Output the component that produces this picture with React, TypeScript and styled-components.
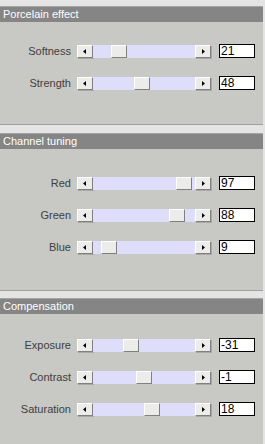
import React from 'react';
import styled, { createGlobalStyle } from 'styled-components';

const GlobalStyle = createGlobalStyle`
  html, body { margin: 0; padding: 0; background: #e4e4e4; }
  body { font-family: "Liberation Sans", Arial, sans-serif; }
`;

const Page = styled.div`
  width: 263px;
  height: 444px;
  overflow: hidden;
  padding-top: 6px;
  border-right: 2px solid #e4e4e4;
  background: #e4e4e4;
`;

const Section = styled.section<{ $gap: number }>`
  border-top: 1px solid #a4a4a4;
  margin-bottom: ${p => p.$gap}px;
`;

const Header = styled.div`
  height: 15px;
  line-height: 15px;
  background: #858585;
  color: #fff;
  font-size: 11px;
  padding-left: 3px;
`;

const Panel = styled.div<{ $top: number; $bottom: number }>`
  background: #c8c8c4;
  padding: ${p => p.$top}px 0 ${p => p.$bottom}px;
  display: flex;
  flex-direction: column;
  gap: 18px;
  border-bottom: 1px solid #a0a0a0;
`;

const Row = styled.div`
  display: flex;
  align-items: center;
  height: 14px;
`;

const Label = styled.span`
  width: 71px;
  text-align: right;
  font-size: 11px;
  color: #404040;
  margin-right: 6px;
`;

const ArrowBtn = styled.div`
  width: 16px;
  height: 13px;
  box-sizing: border-box;
  background: #ececea;
  border-top: 1px solid #fff;
  border-left: 1px solid #fff;
  border-right: 1px solid #808080;
  border-bottom: 1px solid #808080;
  box-shadow: 1px 1px 0 #a8a8a4;
  display: flex;
  align-items: center;
  justify-content: center;
`;

const Track = styled.div`
  position: relative;
  width: 102px;
  height: 13px;
  background: #dedefa;
`;

const Thumb = styled.div`
  position: absolute;
  top: 0;
  width: 16px;
  height: 13px;
  box-sizing: border-box;
  background: #ececea;
  border-top: 1px solid #fff;
  border-left: 1px solid #fff;
  border-right: 1px solid #808080;
  border-bottom: 1px solid #808080;
`;

const ValueBox = styled.div`
  width: 36px;
  height: 14px;
  box-sizing: border-box;
  margin-left: 8px;
  border: 1px solid #000;
  background: #fff;
  font-size: 12px;
  line-height: 12px;
  padding-left: 1px;
  color: #000;
`;

const Tri = ({ dir }: { dir: 'l' | 'r' }) => (
  <svg width="4" height="5" viewBox="0 0 4 5">
    {dir === 'l' ? <path d="M3 0 L0 2.5 L3 5 Z" fill="#000" /> : <path d="M1 0 L4 2.5 L1 5 Z" fill="#000" />}
  </svg>
);

type Slider = { label: string; value: number; min: number; max: number };

const SliderRow = ({ s }: { s: Slider }) => {
  const pos = ((s.value - s.min) / (s.max - s.min)) * 86;
  return (
    <Row>
      <Label>{s.label}</Label>
      <ArrowBtn><Tri dir="l" /></ArrowBtn>
      <Track>
        <Thumb style={{ left: pos }} />
      </Track>
      <ArrowBtn><Tri dir="r" /></ArrowBtn>
      <ValueBox>{s.value}</ValueBox>
    </Row>
  );
};

const sections = [
  {
    title: 'Porcelain effect', top: 22, bottom: 34, gap: 8,
    sliders: [
      { label: 'Softness', value: 21, min: 0, max: 100 },
      { label: 'Strength', value: 48, min: 0, max: 100 },
    ],
  },
  {
    title: 'Channel tuning', top: 27, bottom: 36, gap: 7,
    sliders: [
      { label: 'Red', value: 97, min: 0, max: 100 },
      { label: 'Green', value: 88, min: 0, max: 100 },
      { label: 'Blue', value: 9, min: 0, max: 100 },
    ],
  },
  {
    title: 'Compensation', top: 24, bottom: 40, gap: 0,
    sliders: [
      { label: 'Exposure', value: -31, min: -100, max: 100 },
      { label: 'Contrast', value: -1, min: -100, max: 100 },
      { label: 'Saturation', value: 18, min: -100, max: 100 },
    ],
  },
];

export default function App() {
  return (
    <Page>
      <GlobalStyle />
      {sections.map(sec => (
        <Section key={sec.title} $gap={sec.gap}>
          <Header>{sec.title}</Header>
          <Panel $top={sec.top} $bottom={sec.bottom}>
            {sec.sliders.map(s => <SliderRow key={s.label} s={s} />)}
          </Panel>
        </Section>
      ))}
    </Page>
  );
}
